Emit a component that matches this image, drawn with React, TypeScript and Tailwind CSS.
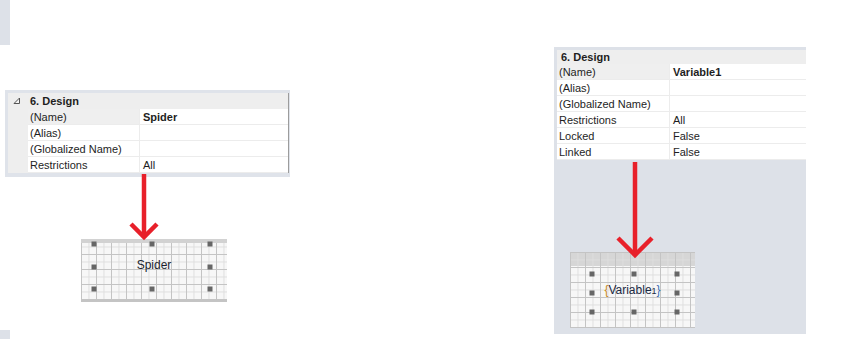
import React from 'react';

const gridBg =
  'bg-[linear-gradient(to_right,#c4c4c4_1px,transparent_1px),linear-gradient(to_bottom,#c4c4c4_1px,transparent_1px),linear-gradient(to_right,#dedede_1px,transparent_1px),linear-gradient(to_bottom,#dedede_1px,transparent_1px)] bg-[size:15px_15px,15px_15px,7.5px_7.5px,7.5px_7.5px]';

type Row = { name: string; value?: string; bold?: boolean; selected?: boolean };

const leftRows: Row[] = [
  { name: '(Name)', value: 'Spider', bold: true, selected: true },
  { name: '(Alias)' },
  { name: '(Globalized Name)' },
  { name: 'Restrictions', value: 'All' },
];

const rightRows: Row[] = [
  { name: '(Name)', value: 'Variable1', bold: true, selected: true },
  { name: '(Alias)' },
  { name: '(Globalized Name)' },
  { name: 'Restrictions', value: 'All' },
  { name: 'Locked', value: 'False' },
  { name: 'Linked', value: 'False' },
];

const Handle = ({ x, y }: { x: number; y: number }) => (
  <div
    className="absolute w-[5px] h-[5px] bg-[#666666] -translate-x-1/2 -translate-y-1/2"
    style={{ left: x, top: y }}
  />
);

const CollapseGlyph = () => (
  <svg width="8" height="8" viewBox="0 0 8 8">
    <polygon points="6.5,1 6.5,6.5 1,6.5" fill="#f4f4f4" stroke="#555" strokeWidth="1" />
  </svg>
);

const PropertyRow = ({ row, margin, nameWidth }: { row: Row; margin: boolean; nameWidth: string }) => (
  <div className="flex h-[16px] leading-[16px]">
    {margin && <div className="w-[20px] bg-[#eeeeee]" />}
    <div
      className={`${nameWidth} shrink-0 pl-[2px] border-b border-r border-[#ececec] ${
        row.selected ? 'bg-[#efefef]' : 'bg-white'
      }`}
    >
      {row.name}
    </div>
    <div className={`flex-1 pl-[3px] bg-white border-b border-[#ececec] ${row.bold ? 'font-bold' : ''}`}>
      {row.value}
    </div>
  </div>
);

const Arrow = ({ x, top, tip, spread, w, h }: { x: number; top: number; tip: number; spread: number; w: number; h: number }) => (
  <svg width={w} height={h} className="block overflow-visible relative z-10">
    <line x1={x} y1={top} x2={x} y2={tip - 2} stroke="#e8202a" strokeWidth="4.5" />
    <polyline
      points={`${x - spread},${tip - spread} ${x},${tip} ${x + spread},${tip - spread}`}
      fill="none"
      stroke="#e8202a"
      strokeWidth="4.5"
    />
  </svg>
);

export default function App() {
  return (
    <div className="w-[854px] h-[339px] bg-white overflow-hidden flex font-['Liberation_Sans',Arial,sans-serif] text-[11px] text-[#1e1e1e]">
      {/* left side */}
      <div className="w-[554px] shrink-0 flex flex-col">
        <div className="w-[10px] h-[45px] bg-[#dde1e8]" />

        <div className="mt-[45px] ml-[5px] w-[285px] h-[87px] bg-[#dfe3ea] pt-[3px] pb-[4px] pl-[3px] pr-[1px]">
          <div className="h-full flex flex-col border-r border-[#9c9c9c]">
            <div className="flex h-[16px] leading-[16px] bg-[#eeeeee]">
              <div className="w-[20px] flex items-center justify-center pr-[2px]">
                <CollapseGlyph />
              </div>
              <div className="pl-[2px] font-bold">6. Design</div>
            </div>
            {leftRows.map((r) => (
              <PropertyRow key={r.name} row={r} margin nameWidth="w-[112px]" />
            ))}
          </div>
        </div>

        <Arrow x={144} top={-3} tip={60} spread={13} w={300} h={62} />

        <div className={`relative ml-[81px] w-[146px] h-[63px] bg-[#f7f7f7] ${gridBg} border-b-2 border-[#c4c4c4]`}>
          <div className="h-[4px] bg-[#d2d2d2]" />
          <div className="absolute left-0 right-0 top-[19px] text-center text-[12px] leading-[14px] text-[#1a1f2e]">
            Spider
          </div>
          <Handle x={13} y={5} />
          <Handle x={71} y={5} />
          <Handle x={129} y={5} />
          <Handle x={13} y={28} />
          <Handle x={129} y={28} />
          <Handle x={13} y={50} />
          <Handle x={71} y={50} />
          <Handle x={129} y={50} />
        </div>

        <div className="mt-[28px] w-[10px] h-[9px] bg-[#dde1e8]" />
      </div>

      {/* right side */}
      <div className="mt-[47px] w-[252px] h-[287px] bg-[#dde1e8] pt-[3px] pl-[3px] flex flex-col">
        <div className="h-[14px] leading-[14px] bg-[#eeeeee] pl-[4px] font-bold">6. Design</div>
        {rightRows.map((r) => (
          <PropertyRow key={r.name} row={r} margin={false} nameWidth="w-[113px]" />
        ))}

        <Arrow x={78} top={2} tip={95} spread={17} w={249} h={92} />

        <div className={`relative ml-[13px] w-[125px] h-[76px] bg-[#f7f7f7] ${gridBg}`}>
          <div className={`h-[14px] bg-[#d6d6d6] ${gridBg}`} />
          <div className="absolute left-0 right-0 top-[31px] text-center text-[12px] leading-[14px] text-[#1b2a44]">
            <span className="text-[#c98a1a]">{'{'}</span>
            Variable<span className="text-[9px]">1</span>
            <span className="text-[#3a6db5]">{'}'}</span>
          </div>
          <Handle x={22} y={22} />
          <Handle x={64} y={22} />
          <Handle x={107} y={22} />
          <Handle x={22} y={41} />
          <Handle x={107} y={41} />
          <Handle x={22} y={60} />
          <Handle x={64} y={60} />
          <Handle x={107} y={60} />
        </div>
      </div>
    </div>
  );
}
